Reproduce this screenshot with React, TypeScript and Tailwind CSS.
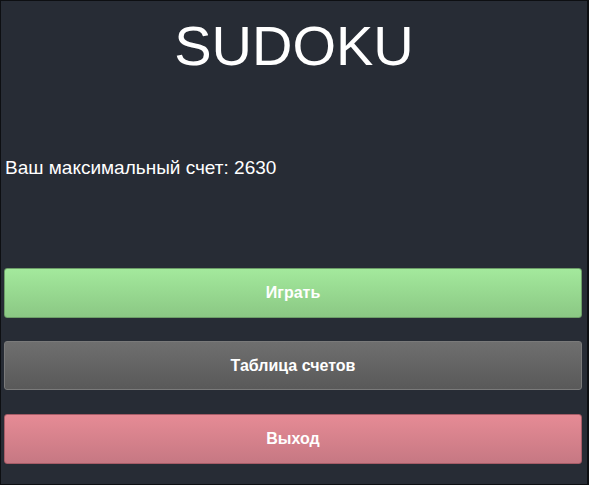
export default function App() {
  return (
    <div className="h-[485px] w-[589px] overflow-hidden border-l border-t border-r-2 border-b border-[#0d0f12] bg-[#272c35] font-['Liberation_Sans',Arial,sans-serif] text-white">
      <h1 className="mt-[13px] text-center text-[56px] leading-[64px]">SUDOKU</h1>
      <p className="mt-[79px] pl-[4px] text-[19px] leading-[22px]">Ваш максимальный счет: 2630</p>
      <div className="mt-[89px] ml-[3px] mr-[5px] flex flex-col">
        <button className="h-[50px] rounded-[3px] border border-[#6d9e68] bg-gradient-to-b from-[#a3e99c] to-[#8bc884] text-[16px] font-bold text-white">
          Играть
        </button>
        <button className="mt-[23px] h-[49px] rounded-[3px] border border-[#7a7a7a] bg-gradient-to-b from-[#6f6f6f] to-[#595959] text-[16px] font-bold text-white">
          Таблица счетов
        </button>
        <button className="mt-[24px] h-[50px] rounded-[3px] border border-[#a65c67] bg-gradient-to-b from-[#e68b95] to-[#c67883] text-[16px] font-bold text-white">
          Выход
        </button>
      </div>
    </div>
  );
}
